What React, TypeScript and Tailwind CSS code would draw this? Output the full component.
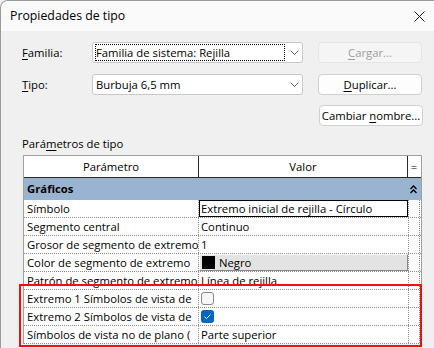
const Chevron = () => (
	<svg width="9" height="5" viewBox="0 0 9 5" className="shrink-0">
		<polyline points="0.5,0.5 4.5,4.5 8.5,0.5" fill="none" stroke="#5f5f5f" strokeWidth="1" />
	</svg>
);

const Combo = ({ text, focused }: { text: string; focused?: boolean }) => (
	<div className="w-[211px] h-[21px] bg-white border border-[#c8c8c8] rounded-[3px] flex items-center pl-[2px] pr-[3px]">
		<div
			className={`flex-1 h-[17px] flex items-center pl-[1px] mr-[4px] ${
				focused ? "outline outline-1 outline-dotted outline-black -outline-offset-1" : ""
			}`}>
			<span className="mr-auto">{text}</span>
		</div>
		<div className="w-[10px] flex justify-center">
			<Chevron />
		</div>
	</div>
);

const Btn = ({ children, disabled }: { children: React.ReactNode; disabled?: boolean }) => (
	<div
		className={`w-[104px] h-[21px] rounded-[4px] border flex items-center justify-center ${
			disabled
				? "bg-[#f5f5f5] border-[#e5e5e5] text-[#9d9d9d]"
				: "bg-[#fdfdfd] border-[#d0d0d0] text-black"
		}`}>
		<span className="whitespace-pre">{children}</span>
	</div>
);

type Row = { name: string; value: React.ReactNode; kind?: "edit" | "button" };

// names are shown as the grid cuts them
const rows: Row[] = [
	{ name: "Símbolo", value: "Extremo inicial de rejilla - Círculo", kind: "edit" },
	{ name: "Segmento central", value: "Continuo" },
	{ name: "Grosor de segmento de extremo", value: "1" },
	{ name: "Color de segmento de extremo", value: "Negro", kind: "button" },
	{ name: "Patrón de segmento de extremo", value: "Línea de rejilla" },
	{
		name: "Extremo 1 Símbolos de vista de",
		value: <div className="w-[13px] h-[13px] rounded-[3px] border border-[#8a8a8a] bg-[#f7f7f7]" />,
	},
	{
		name: "Extremo 2 Símbolos de vista de",
		value: (
			<div className="w-[13px] h-[13px] rounded-[3px] bg-[#0067c0] flex items-center justify-center">
				<svg width="9" height="7" viewBox="0 0 9 7">
					<polyline points="1.5,3.8 3.5,5.6 7.5,1.5" fill="none" stroke="white" strokeWidth="1" />
				</svg>
			</div>
		),
	},
	{ name: "Símbolos de vista no de plano (", value: "Parte superior" },
];

const App = () => {
	return (
		<div className="w-[434px] h-[348px] overflow-hidden relative bg-[#f0f0f0] font-['Open_Sans',sans-serif] text-[11.3px] text-black leading-none">
			<div className="h-full border-l border-t border-[#9a9a9a] rounded-tl-[8px] overflow-hidden">
				{/* title bar */}
				<div className="h-[30px] bg-[#fafafa] flex items-center pl-[9px] pr-[8px]">
					<span className="text-[12.3px] mt-[1px]">Propiedades de tipo</span>
					<svg width="11" height="11" viewBox="0 0 11 11" className="ml-auto mt-[1px] mr-[1px]">
						<path d="M0.5 0.5 L10.5 10.5 M10.5 0.5 L0.5 10.5" stroke="#1a1a1a" strokeWidth="1" />
					</svg>
				</div>

				<div className="pl-[21px] pt-[11px]">
					<div className="flex items-center h-[21px]">
						<span className="w-[70px]">
							<u className="underline-offset-2">F</u>amilia:
						</span>
						<Combo text="Familia de sistema: Rejilla" focused />
						<div className="ml-[15px]">
							<Btn disabled>
								<u className="underline-offset-2">C</u>argar...
							</Btn>
						</div>
					</div>
					<div className="flex items-center h-[21px] mt-[11px]">
						<span className="w-[70px]">
							<u className="underline-offset-2">T</u>ipo:
						</span>
						<Combo text="Burbuja 6,5 mm" />
						<div className="ml-[15px]">
							<Btn>
								<u className="underline-offset-2">D</u>uplicar...
							</Btn>
						</div>
					</div>
					<div className="flex justify-end pr-[11px] mt-[10px]">
						<Btn>
							Cambiar <u className="underline-offset-2">n</u>ombre...
						</Btn>
					</div>

					<div className="mt-[11px] h-[14px] flex items-center">
						<span>
							Pará<u className="underline-offset-2">m</u>etros de tipo
						</span>
					</div>

					{/* table */}
					<div className="mt-[4px] ml-[1px] w-[399px] border-t border-l border-r border-[#a0a0a0] bg-white">
						<div className="flex h-[22px] border-b border-[#2a2a2a]">
							<div className="w-[175px] border-r border-[#2a2a2a] flex items-center justify-center">Parámetro</div>
							<div className="w-[209px] border-r border-[#2a2a2a] flex items-center justify-center">Valor</div>
							<div className="w-[12px] flex items-center justify-center">=</div>
						</div>
						<div className="flex h-[22px] bg-[#99b4d1] items-center pl-[3px] pr-[4px]">
							<span className="font-bold">Gráficos</span>
							<svg width="7" height="9" viewBox="0 0 7 9" className="ml-auto">
								<polyline points="0.5,4 3.5,1 6.5,4" fill="none" stroke="#000" strokeWidth="1.3" />
								<polyline points="0.5,8 3.5,5 6.5,8" fill="none" stroke="#000" strokeWidth="1.3" />
							</svg>
						</div>
						{rows.map((r) => (
							<div key={r.name} className="flex h-[18px] border-b border-dotted border-[#8c8c8c]">
								<div className="w-[175px] border-r border-dotted border-[#8c8c8c] flex items-center pl-[3px] overflow-hidden whitespace-nowrap">
									{r.name}
								</div>
								<div className="w-[209px] flex items-center overflow-hidden whitespace-nowrap">
									{r.kind === "edit" ? (
										<div className="w-full h-full border border-black flex items-center pl-[1px]">{r.value}</div>
									) : r.kind === "button" ? (
										<div className="w-full h-full bg-[#e3e3e3] border border-t-white border-l-white border-r-[#888] border-b-[#888] flex items-center pl-[2px]">
											<div className="w-[13px] h-[13px] bg-black" />
											<span className="ml-[4px]">{r.value}</span>
										</div>
									) : (
										<div className="pl-[2px]">{r.value}</div>
									)}
								</div>
								<div className="w-[12px] border-l border-r border-dotted border-[#8c8c8c]" />
							</div>
						))}
					</div>
				</div>
			</div>

			{/* red annotation */}
			<div className="absolute left-[19px] top-[284px] w-[403px] h-[63px] border-2 border-[#ee1111]" />
		</div>
	);
};

export default App;
